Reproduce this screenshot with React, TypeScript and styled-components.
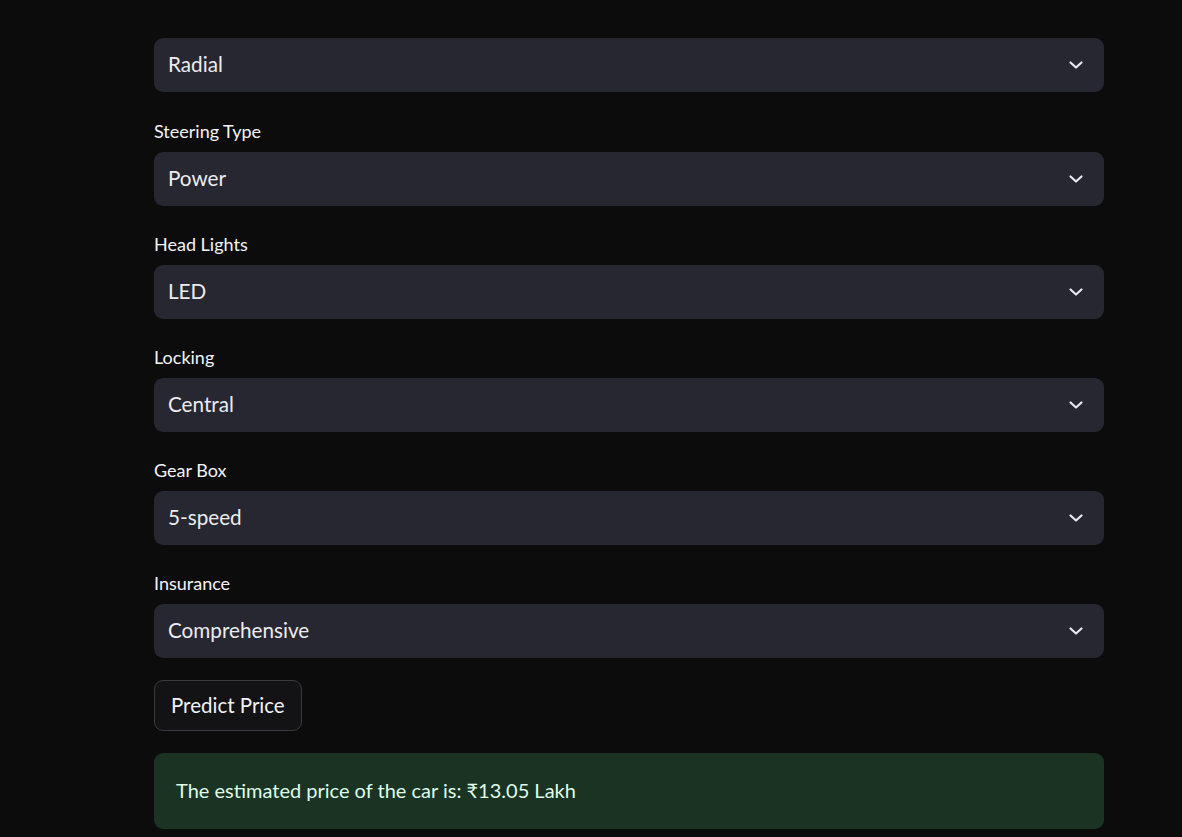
import React from "react";
import styled, { createGlobalStyle } from "styled-components";

const Global = createGlobalStyle`
  html, body {
    margin: 0;
    padding: 0;
    background: #0c0c0d;
  }
  body {
    font-family: "Lato", "Noto Sans", "DejaVu Sans", sans-serif;
    color: #fafafa;
  }
`;

const Page = styled.main`
  min-height: 837px;
  background: #0c0c0d;
  padding: 38px 0 0 154px;
  box-sizing: border-box;
`;

const Form = styled.div`
  width: 950px;
  display: flex;
  flex-direction: column;
  gap: 20px;
`;

const Field = styled.div<{ $first?: boolean }>`
  display: flex;
  flex-direction: column;
  margin-bottom: ${(p) => (p.$first ? "1px" : "0")};
`;

const Label = styled.label`
  display: block;
  padding-top: 8px;
  margin-bottom: 11px;
  font-size: 18px;
  line-height: 20px;
  color: #f4f4f6;
`;

const Select = styled.div`
  height: 54px;
  box-sizing: border-box;
  background: #272731;
  border-radius: 9px;
  display: flex;
  align-items: center;
  justify-content: space-between;
  padding: 0 20px 2px 14px;
  font-size: 20.7px;
  color: #ececf0;
  cursor: pointer;
`;

const Chevron = styled.svg`
  width: 16px;
  height: 16px;
  flex: none;
`;

const Button = styled.button`
  align-self: flex-start;
  height: 51px;
  padding: 0 16px 2px;
  border-radius: 9px;
  border: 1px solid #3b3a40;
  background: #131214;
  color: #f2f2f4;
  font-family: inherit;
  font-size: 20.5px;
  cursor: pointer;
  margin-top: 2px;
`;

const Success = styled.div`
  margin-top: 2px;
  height: 76px;
  box-sizing: border-box;
  background: #1a3323;
  border-radius: 9px;
  display: flex;
  align-items: center;
  padding: 0 22px 2px;
  font-size: 20px;
  color: #dffde9;
`;

const ChevronIcon = () => (
  <Chevron viewBox="0 0 16 16" fill="none">
    <path d="M2.5 6.5 L8 11.5 L13.5 6.5" stroke="#e8e8ee" strokeWidth="2.2" strokeLinecap="round" strokeLinejoin="round" />
  </Chevron>
);

const fields: { label?: string; value: string }[] = [
  { value: "Radial" },
  { label: "Steering Type", value: "Power" },
  { label: "Head Lights", value: "LED" },
  { label: "Locking", value: "Central" },
  { label: "Gear Box", value: "5-speed" },
  { label: "Insurance", value: "Comprehensive" },
];

export default function App() {
  return (
    <>
      <Global />
      <Page>
        <Form>
          {fields.map((f, i) => (
            <Field key={f.value} $first={i === 0}>
              {f.label && <Label>{f.label}</Label>}
              <Select>
                <span>{f.value}</span>
                <ChevronIcon />
              </Select>
            </Field>
          ))}
          <Button>Predict Price</Button>
          <Success>The estimated price of the car is: ₹13.05 Lakh</Success>
        </Form>
      </Page>
    </>
  );
}
